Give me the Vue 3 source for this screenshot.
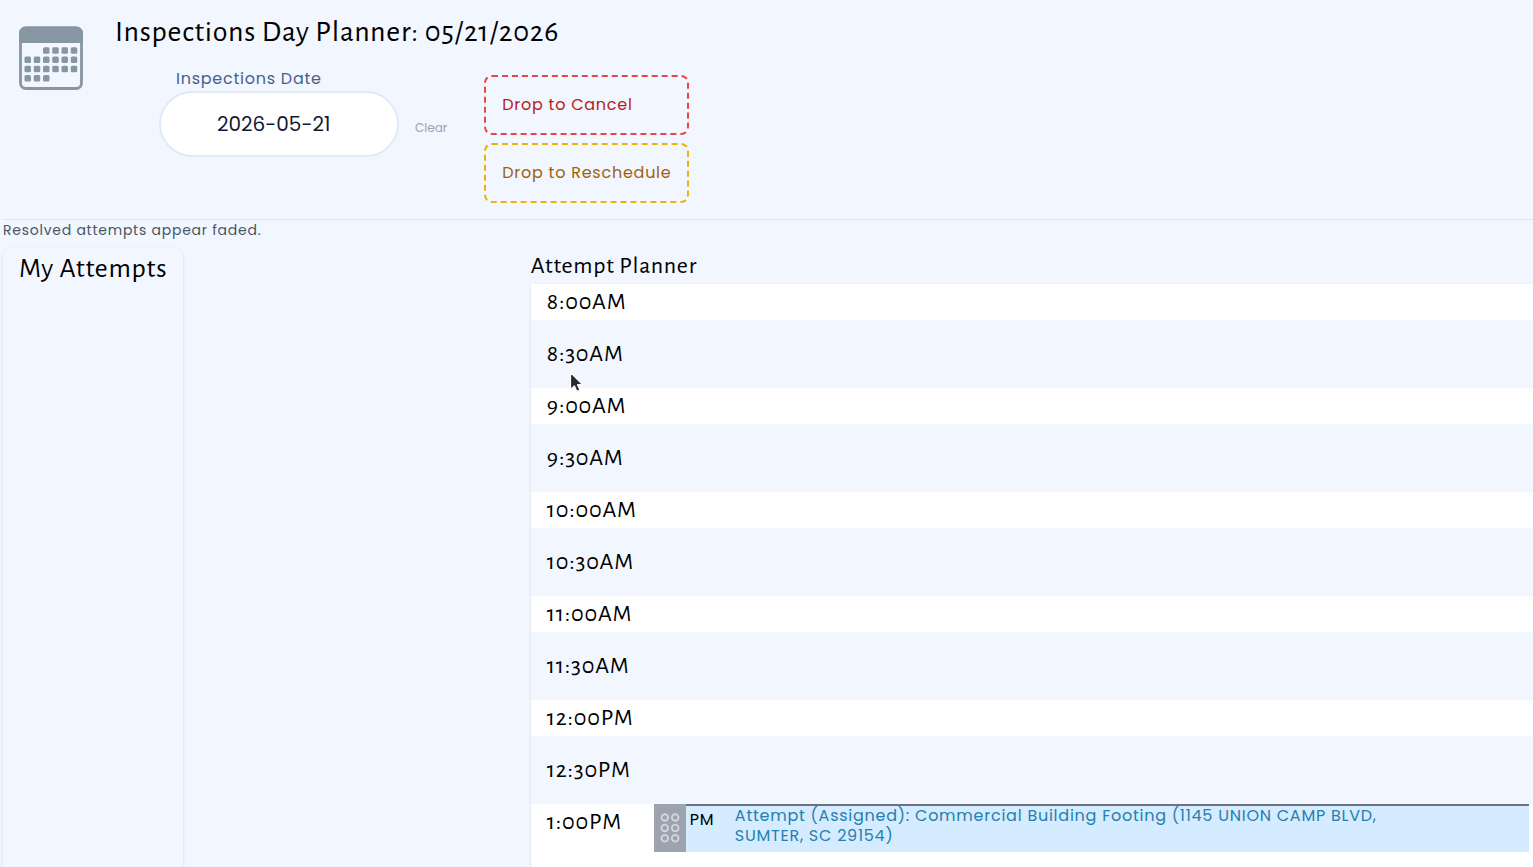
<script setup>
import { ref } from 'vue'

const date = ref('2026-05-21')
const slots = [
  '8:00AM', '8:30AM', '9:00AM', '9:30AM', '10:00AM', '10:30AM',
  '11:00AM', '11:30AM', '12:00PM', '12:30PM', '1:00PM',
].map((time) => ({ time, attempt: null }))
slots[10].attempt = {
  period: 'PM',
  text: 'Attempt (Assigned): Commercial Building Footing (1145 UNION CAMP BLVD, SUMTER, SC 29154)',
}

// Day squares of the calendar icon: [first column, last column] per week
const weeks = [[2, 5], [0, 5], [0, 5], [0, 2]]
const days = weeks.flatMap(([from, to], row) =>
  Array.from({ length: to - from + 1 }, (_, i) => ({
    x: 5.5 + (from + i) * 9.25,
    y: 21.2 + row * 9.25,
  })),
)
</script>

<template>
  <div class="page">
    <header class="top">
      <svg class="calendar" viewBox="0 0 64 64" aria-hidden="true">
        <rect x="1.5" y="2" width="61" height="60.5" rx="5.5" fill="none" stroke="#8796a3" stroke-width="2.800" />
        <path d="M0 17V7a6.500 6.500 0 0 1 6.500-6.500h51a6.500 6.500 0 0 1 6.500 6.500v10z" fill="#8796a3" />
        <rect v-for="d in days" :key="`${d.x}-${d.y}`" :x="d.x" :y="d.y" width="6.500" height="6.500" rx="1.500" fill="#8796a3" />
      </svg>
      <div class="heading">
        <h1>Inspections Day Planner: 05/21/2026</h1>
        <div class="controls">
          <div class="field">
            <label for="date">Inspections Date</label>
            <input id="date" v-model="date" type="text" />
          </div>
          <button class="clear" type="button" @click="date = ''">Clear</button>
          <div class="drops">
            <div class="drop cancel">Drop to Cancel</div>
            <div class="drop reschedule">Drop to Reschedule</div>
          </div>
        </div>
      </div>
    </header>

    <p class="note">Resolved attempts appear faded.</p>

    <main class="board">
      <section class="mine">
        <h2>My Attempts</h2>
      </section>
      <section class="planner">
        <h3>Attempt Planner</h3>
        <ul class="slots">
          <li v-for="slot in slots" :key="slot.time" class="slot" :class="{ filled: slot.attempt }">
            <span class="time">{{ slot.time }}</span>
            <article v-if="slot.attempt" class="attempt">
              <div class="handle">
                <svg viewBox="0 0 20 32" width="20" height="32" aria-hidden="true">
                  <g fill="none" stroke="#d1d5db" stroke-width="1.900">
                    <circle v-for="n in 6" :key="n" :cx="n % 2 ? 4.8 : 15.2" :cy="5.500 + Math.floor((n - 1) / 2) * 10.400" r="3.300" />
                  </g>
                </svg>
              </div>
              <div class="body">
                <span class="period">{{ slot.attempt.period }}</span>
                <a class="link" href="#">{{ slot.attempt.text }}</a>
              </div>
            </article>
          </li>
        </ul>
      </section>
    </main>

    <svg class="pointer" viewBox="0 0 16 22" width="16" height="22" aria-hidden="true">
      <path d="M1.500 1.500v17l3.900-3.600 2.500 5.500 3.100-1.400-2.500-5.300h5.300z" fill="#2b2b2b" stroke="#fff" stroke-width="1.200" stroke-linejoin="round" />
    </svg>
  </div>
</template>

<style>
body {
  background: #f1f6ff;
}
</style>

<style scoped>
.page {
  position: relative;
  box-sizing: border-box;
  display: flex;
  flex-direction: column;
  height: 100vh;
  padding-left: 3px;
  overflow: hidden;
  background: #f1f6ff;
  color: #000;
  font: 16px/24px Poppins, Inter, sans-serif;
  letter-spacing: 0.75px;
}

h1,
h2,
h3,
.time {
  margin: 0;
  font-family: "Alegreya Sans", Lato, sans-serif;
  font-weight: 400;
}

.top {
  display: flex;
  gap: 32px;
  padding: 16px;
  border-bottom: 1px solid #e2e5ee;
}

.calendar {
  flex: none;
  width: 64px;
  height: 64px;
  margin-top: 10px;
}

h1 {
  font-size: 30px;
  line-height: 32px;
}

.controls {
  display: flex;
  align-items: flex-start;
  margin-left: 44px;
}

.field {
  display: flex;
  flex-direction: column;
  padding-top: 18px;
}

label {
  padding-left: 17px;
  color: #47628a;
  line-height: 25px;
}

input {
  box-sizing: border-box;
  width: 240px;
  height: 66px;
  padding: 0 24px 0 56px;
  border: 2px solid #e1e9f7;
  border-radius: 33px;
  background: #fff;
  color: #0f1b33;
  font: 20px Poppins, Inter, sans-serif;
}

.clear {
  margin: 68px 37px 0 16px;
  padding: 0;
  border: 0;
  background: none;
  color: #9ca3af;
  font: 12px/24px Poppins, Inter, sans-serif;
}

.drops {
  display: flex;
  flex-direction: column;
  gap: 8px;
  padding-top: 27px;
}

.drop {
  padding: 16px;
  border: 2px dashed;
  border-radius: 8px;
  white-space: nowrap;
}

.cancel {
  border-color: #ef4444;
  color: #b91c1c;
}

.reschedule {
  border-color: #eab308;
  color: #a16207;
}

.note {
  margin: 0;
  color: #4b5563;
  font-size: 14px;
  line-height: 20px;
}

.board {
  display: flex;
  flex: 1;
  align-items: stretch;
  justify-content: space-between;
  min-height: 0;
  padding-top: 8px;
}

.mine {
  box-sizing: border-box;
  min-width: 180px;
  padding: 4px 16px;
  border-radius: 8px 8px 0 0;
  box-shadow: 0 1px 3px rgb(0 0 0 / 12%);
}

h2 {
  font-size: 28px;
  line-height: 34px;
  white-space: nowrap;
}

.planner {
  width: 65.5%;
  padding-top: 4px;
}

h3 {
  font-size: 24px;
  line-height: 28px;
}

.slots {
  display: flex;
  flex-direction: column;
  gap: 16px;
  margin: 4px 0 0;
  padding: 0;
  box-shadow: 0 1px 3px rgb(0 0 0 / 12%);
  list-style: none;
}

.slot {
  display: flex;
  min-height: 36px;
}

.slot:nth-child(odd) {
  background: #fff;
}

.filled {
  min-height: 64px;
}

.time {
  flex: none;
  width: 107px;
  padding-left: 16px;
  font-size: 24px;
  line-height: 36px;
}

.attempt {
  display: flex;
  flex: 1;
  align-self: flex-start;
  min-height: 48px;
  margin-right: 4px;
  background: #d5ebff;
}

.handle {
  display: flex;
  flex: none;
  align-items: center;
  justify-content: center;
  width: 32px;
  background: #9ca3af;
}

.body {
  display: flex;
  flex: 1;
  border-top: 2px solid #6b7280;
}

.period {
  flex: none;
  width: 45px;
  padding: 4px 0 0 4px;
  line-height: 20px;
}

.link {
  max-width: 680px;
  color: #2480ad;
  line-height: 20px;
  text-decoration: none;
}

.pointer {
  position: absolute;
  top: 371px;
  left: 569px;
}
</style>
